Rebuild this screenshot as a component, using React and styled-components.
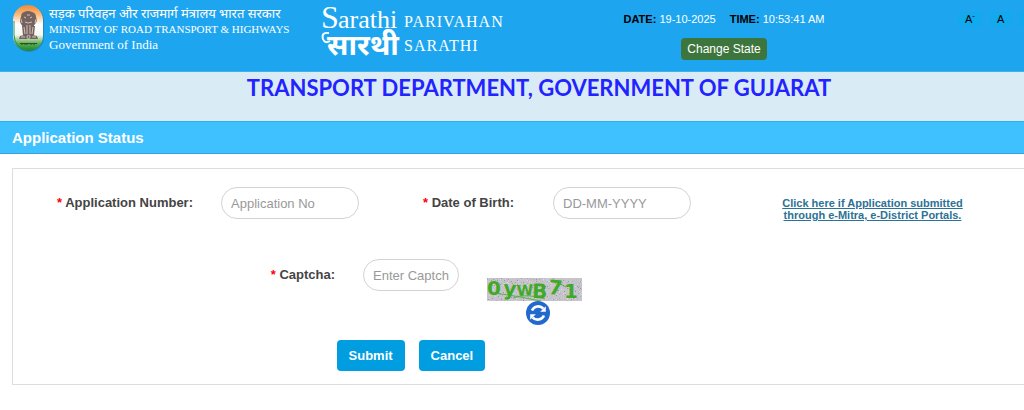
import React, { useState } from "react"
import styled, { createGlobalStyle } from "styled-components"

const GlobalStyle = createGlobalStyle`
  * {
    box-sizing: border-box;
  }

  body {
    margin: 0;
    background: #fff;
    color: #444;
    font-family: "Liberation Sans", Arial, sans-serif;
    font-size: 13px;
    overflow-x: hidden;
  }

  h1, h2, p {
    margin: 0;
  }

  button, input {
    font-family: inherit;
  }
`

const Header = styled.header`
  display: grid;
  grid-template-columns: minmax(0, 321fr) minmax(0, 278fr) minmax(0, 250fr) minmax(0, 175fr);
  height: 72px;
  background: #1ea5f0;
  border-bottom: 1px solid #3fb0ee;
  overflow: hidden;
`

const Ministry = styled.div`
  display: flex;
  align-items: flex-start;
  gap: 4px;
  padding: 4px 0 0 12px;
  color: #fff;
  white-space: nowrap;
`

const MinistryText = styled.div`
  display: flex;
  flex-direction: column;
  padding-top: 3px;
  font-family: "Liberation Serif", "Times New Roman", serif;
  font-size: 11px;
  line-height: 15px;
`

const Hindi = styled.span`
  font-family: "Noto Sans Devanagari", "Noto Sans", sans-serif;
  font-size: 13px;
`

const Government = styled.span`
  font-size: 13px;
`

const Portal = styled.div`
  display: flex;
  align-items: flex-start;
  gap: 3px;
  padding-top: 4px;
  color: #fff;
`

const PortalName = styled.div`
  padding-top: 6px;
  font-family: "Liberation Serif", "Times New Roman", serif;
  font-size: 16px;
  line-height: 24px;
  letter-spacing: 1px;
`

const Session = styled.div`
  display: flex;
  flex-direction: column;
  align-items: center;
  gap: 12px;
  padding-top: 12px;
`

const Clock = styled.div`
  display: flex;
  gap: 14px;
  color: #fff;
  font-size: 11px;
  line-height: 14px;
  white-space: nowrap;

  b {
    color: #000;
  }
`

const StateButton = styled.button`
  height: 22px;
  padding: 0 6px;
  border: 0;
  border-radius: 4px;
  background: #3d763d;
  color: #fff;
  font-size: 12px;
  cursor: pointer;
`

const TextSizes = styled.div`
  display: flex;
  align-items: flex-start;
  gap: 8px;
  padding: 12px 0 0 109px;
`

const SizeButton = styled.button`
  flex: none;
  height: 15px;
  padding: 0 7px;
  border: 0;
  border-radius: 4px;
  background: #12a9ed;
  color: #000;
  font-size: 11px;
  line-height: 15px;
  cursor: pointer;

  sup {
    font-size: 8px;
    line-height: 0;
  }
`

const Department = styled.h1`
  height: 49px;
  padding-left: 54px;
  background: #d9ecf6;
  color: #2323ff;
  font-family: "Trebuchet MS", Lato, sans-serif;
  font-size: 22px;
  font-weight: bold;
  line-height: 32px;
  text-align: center;
  white-space: nowrap;
`

const TitleBar = styled.h2`
  height: 33px;
  padding-left: 12px;
  border-top: 1px solid #2fb0ee;
  border-bottom: 1px solid #36a3e0;
  background: #40c1ff;
  color: #fff;
  font-size: 15px;
  line-height: 31px;
`

const Panel = styled.form`
  margin: 14px 0 24px 12px;
  padding: 18px 0 13px;
  border: 1px solid #ddd;
  border-right: 0;
`

const Row = styled.div`
  display: grid;
  grid-template-columns: ${({ $columns }) => $columns};
  align-items: start;

  & + & {
    margin-top: 38px;
  }
`

const Label = styled.label`
  padding-right: ${({ $gap }) => $gap || "28px"};
  color: #444;
  font-weight: bold;
  line-height: 32px;
  text-align: right;

  span {
    color: #f00;
  }
`

const Input = styled.input`
  width: 100%;
  height: 32px;
  padding: 0 9px;
  border: 1px solid #d3d3d3;
  border-radius: 16px;
  background: #fff;
  color: #444;
  font-size: 13px;
  outline: none;

  &::placeholder {
    color: #999;
    opacity: 1;
  }
`

const PortalLink = styled.a`
  justify-self: center;
  margin: 10px 0 0 30px;
  color: #2c7296;
  font-size: 11px;
  font-weight: bold;
  line-height: 12px;
  text-align: center;
`

const Captcha = styled.div`
  display: flex;
  flex-direction: column;
  align-items: center;
  width: 102px;
  margin-left: 28px;
  padding-top: 19px;
`

const CaptchaImage = styled.svg`
  align-self: flex-start;
  display: block;
`

const RefreshButton = styled.button`
  display: block;
  padding: 0;
  border: 0;
  background: none;
  line-height: 0;
  cursor: pointer;
`

const Actions = styled.div`
  display: flex;
  gap: 14px;
  margin-top: 15px;
  padding-left: 32%;
`

const ActionButton = styled.button`
  height: 31px;
  padding: 0 12px;
  border: 0;
  border-radius: 4px;
  background: #009de0;
  color: #fff;
  font-size: 13px;
  font-weight: bold;
  cursor: pointer;
`

const Emblem = () => (
  <svg width="33" height="48" viewBox="0 0 33 48" role="img" aria-label="State emblem of India">
    <defs>
      <linearGradient id="flag" x1="0" y1="0" x2="0" y2="1">
        <stop offset="0" stopColor="#ef8b35" />
        <stop offset="0.2" stopColor="#f9b779" />
        <stop offset="0.42" stopColor="#fff" />
        <stop offset="0.65" stopColor="#f3f8ef" />
        <stop offset="0.84" stopColor="#5cae50" />
        <stop offset="1" stopColor="#16832f" />
      </linearGradient>
    </defs>
    <rect x="2" y="2" width="30" height="46" rx="15" fill="#236b83" opacity="0.5" />
    <rect x="1" y="1" width="30" height="46" rx="15" fill="url(#flag)" />
    <path d="M2 17v14a14 15 0 0 0 14 15" fill="none" stroke="#32904a" strokeWidth="1" />
    <g fill="#75625f">
      <path d="M9 13q0-4 3-5 4-2 8 0 4 1 4 5 2 4-1 7l-2 3H11l-2-3q-2-3 0-7z" />
      <path d="M10 22h13l-1 9H11z" />
      <path d="M8 32q8-3 17 0l1 3H7z" />
    </g>
    <g fill="none" stroke="#e7d9cd" strokeWidth="0.8">
      <path d="M12 13l2 1M18 14l2-1M13 18q3 2 7 0M9 15l1 4M24 15l-1 4M15 11h3" />
      <path d="M12 23l1 7M15 21v9M18 21v9M21 23l-1 7" />
      <circle cx="16.5" cy="33" r="1.6" />
      <path d="M9 33h4M20 33h4" />
    </g>
    <path d="M8 39.5h17M10 41v-1M13 41v-2M15 41v-1M19 41v-2M22 41v-1" stroke="#344a26" strokeWidth="1" />
  </svg>
)

const SarathiLogo = () => (
  <svg width="80" height="60" viewBox="0 0 80 60" fill="#fff" role="img" aria-label="Sarathi">
    <g fontFamily="Liberation Serif, serif">
      <text x="0" y="24" fontSize="32">
        S
      </text>
      <text x="17" y="24" fontSize="26">
        arathi
      </text>
    </g>
    <text
      x="6"
      y="51"
      fontFamily="Noto Sans Devanagari, Noto Sans, sans-serif"
      fontSize="29"
      fontWeight="bold"
    >
      सारथी
    </text>
    <path d="M8 29q-8-1-6 6 2 5 7 2" fill="none" stroke="#fff" strokeWidth="2" />
  </svg>
)

const speckles = Array.from({ length: 420 }, (_, i) => ({
  x: (i * 37 + ((i * i) % 23)) % 95,
  y: (i * 17 + ((i * i) % 13)) % 23,
  fill: ["#b3afb7", "#dcd8df", "#9d99a2", "#d3cbd6", "#bcc0b9"][(i * 7 + (i % 11)) % 5],
}))

const captchaLetters = [
  { char: "0", x: 0, y: 17, angle: 0, size: 20 },
  { char: "y", x: 16, y: 17, angle: 4, size: 20 },
  { char: "W", x: 30, y: 18, angle: -3, size: 15 },
  { char: "B", x: 45, y: 20, angle: 1, size: 20 },
  { char: "7", x: 61, y: 16, angle: 5, size: 20 },
  { char: "1", x: 77, y: 20, angle: 0, size: 20 },
]

const CaptchaPicture = () => (
  <CaptchaImage width="95" height="23" viewBox="0 0 95 23" role="img" aria-label="Captcha">
    <rect width="95" height="23" fill="#c7c3ca" />
    {speckles.map((dot, i) => (
      <rect key={i} x={dot.x} y={dot.y} width="1" height="1" fill={dot.fill} />
    ))}
    <path d="M8 15q22 3 46 8M26 20q14-5 32 1M70 4l9 5" fill="none" stroke="#5ab14c" strokeWidth="1" />
    <g fill="#3faa28" fontFamily="DejaVu Sans, sans-serif" fontWeight="bold">
      {captchaLetters.map(({ char, x, y, angle, size }) => (
        <text key={char} x={x} y={y} fontSize={size} transform={`rotate(${angle} ${x} ${y})`}>
          {char}
        </text>
      ))}
    </g>
  </CaptchaImage>
)

const RefreshIcon = () => (
  <svg width="24" height="24" viewBox="0 0 24 24">
    <circle cx="12" cy="12" r="12" fill="#2369cd" />
    <g fill="none" stroke="#fff" strokeWidth="2.6">
      <path d="M6 9.5a6.8 6.8 0 0 1 11.4-1.8" />
      <path d="M18 14.5a6.8 6.8 0 0 1-11.4 1.8" />
    </g>
    <path d="M19.8 5.2v5.6h-5.6zM4.2 18.8v-5.6h5.6z" fill="#fff" />
  </svg>
)

const App = () => {
  const [form, setForm] = useState({ number: "", birth: "", captcha: "" })

  const handleChange = e => {
    setForm({ ...form, [e.target.name]: e.target.value })
  }

  const handleCancel = () => {
    setForm({ number: "", birth: "", captcha: "" })
  }

  return (
    <>
      <GlobalStyle />
      <Header>
        <Ministry>
          <Emblem />
          <MinistryText>
            <Hindi lang="hi">सड़क परिवहन और राजमार्ग मंत्रालय भारत सरकार</Hindi>
            <span>MINISTRY OF ROAD TRANSPORT &amp; HIGHWAYS</span>
            <Government>Government of India</Government>
          </MinistryText>
        </Ministry>
        <Portal>
          <SarathiLogo />
          <PortalName>
            PARIVAHAN
            <br />
            SARATHI
          </PortalName>
        </Portal>
        <Session>
          <Clock>
            <span>
              <b>DATE:</b> 19-10-2025
            </span>
            <span>
              <b>TIME:</b> 10:53:41 AM
            </span>
          </Clock>
          <StateButton type="button">Change State</StateButton>
        </Session>
        <TextSizes>
          <SizeButton type="button">
            A<sup>-</sup>
          </SizeButton>
          <SizeButton type="button">A</SizeButton>
          <SizeButton type="button">
            A<sup>+</sup>
          </SizeButton>
        </TextSizes>
      </Header>
      <Department>TRANSPORT DEPARTMENT, GOVERNMENT OF GUJARAT</Department>
      <TitleBar>Application Status</TitleBar>
      <Panel onSubmit={e => e.preventDefault()}>
        <Row $columns="208fr 138fr 194fr 138fr 333fr">
          <Label htmlFor="number">
            <span>*</span> Application Number:
          </Label>
          <Input
            id="number"
            name="number"
            placeholder="Application No"
            value={form.number}
            onChange={handleChange}
          />
          <Label htmlFor="birth" $gap="39px">
            <span>*</span> Date of Birth:
          </Label>
          <Input
            id="birth"
            name="birth"
            placeholder="DD-MM-YYYY"
            value={form.birth}
            onChange={handleChange}
          />
          <PortalLink href="#portals">
            Click here if Application submitted
            <br />
            through e-Mitra, e-District Portals.
          </PortalLink>
        </Row>
        <Row $columns="350fr 96fr 565fr">
          <Label htmlFor="captcha">
            <span>*</span> Captcha:
          </Label>
          <Input
            id="captcha"
            name="captcha"
            placeholder="Enter Captcha"
            value={form.captcha}
            onChange={handleChange}
          />
          <Captcha>
            <CaptchaPicture />
            <RefreshButton type="button" aria-label="Refresh captcha">
              <RefreshIcon />
            </RefreshButton>
          </Captcha>
        </Row>
        <Actions>
          <ActionButton type="submit">Submit</ActionButton>
          <ActionButton type="button" onClick={handleCancel}>
            Cancel
          </ActionButton>
        </Actions>
      </Panel>
    </>
  )
}

export default App
